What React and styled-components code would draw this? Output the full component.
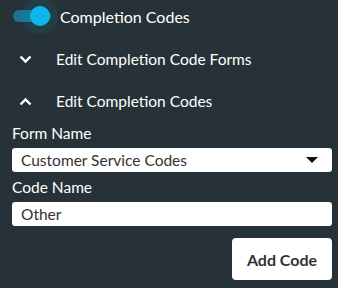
import React from "react";
import styled, { createGlobalStyle } from "styled-components";

const GlobalStyle = createGlobalStyle`
  html, body {
    margin: 0;
    padding: 0;
    background: #263238;
  }
  body {
    font-family: Lato, "Open Sans", sans-serif;
    color: #ffffff;
  }
`;

const Panel = styled.div`
  width: 338px;
  height: 288px;
  box-sizing: border-box;
  padding: 0 6px 0 12px;
  display: flex;
  flex-direction: column;
`;

const ToggleRow = styled.div`
  height: 32px;
  display: flex;
  align-items: center;
  gap: 9px;
`;

const SwitchBox = styled.div`
  position: relative;
  width: 38px;
  height: 12px;
  margin-left: 1px;
`;

const Track = styled.div`
  width: 100%;
  height: 100%;
  border-radius: 6px;
  background: ${(p) => (p.$on ? "rgba(13, 180, 233, 0.5)" : "rgba(255,255,255,0.3)")};
`;

const Halo = styled.div`
  position: absolute;
  top: -12px;
  left: ${(p) => (p.$on ? "9px" : "-9px")};
  width: 36px;
  height: 36px;
  border-radius: 50%;
  background: rgba(13, 180, 233, 0.09);
`;

const Thumb = styled.div`
  position: absolute;
  top: -4px;
  left: ${(p) => (p.$on ? "17px" : "-1px")};
  width: 20px;
  height: 20px;
  border-radius: 50%;
  background: #0db6ea;
`;

const ToggleLabel = styled.span`
  font-size: 16px;
  line-height: 1;
  margin-top: 1px;
`;

const SectionRow = styled.div`
  height: 42px;
  display: flex;
  align-items: center;
  padding-left: 7px;
  gap: 24px;
  font-size: 15.5px;
`;

const Chevron = ({ up }) => (
  <svg width="13" height="9" viewBox="0 0 13 9">
    <path
      d={up ? "M1.5 7.5 L6.5 2.5 L11.5 7.5" : "M1.5 1.5 L6.5 6.5 L11.5 1.5"}
      stroke="#ffffff"
      strokeWidth="2.4"
      fill="none"
    />
  </svg>
);

const Field = styled.label`
  display: flex;
  flex-direction: column;
  font-size: 15.5px;
  gap: 6px;
  margin-top: ${(p) => p.$top || 0}px;
`;

const Box = styled.div`
  height: 24px;
  background: #ffffff;
  border-radius: 3px;
  display: flex;
  align-items: center;
  justify-content: space-between;
  padding: 0 14px 0 9px;
  color: #333333;
  font-size: 15.5px;
`;

const Caret = () => (
  <svg width="12" height="6" viewBox="0 0 12 6">
    <path d="M0 0 H12 L6 6 Z" fill="#111111" />
  </svg>
);

const Actions = styled.div`
  display: flex;
  justify-content: flex-end;
  margin-top: 12px;
`;

const Button = styled.button`
  width: 100px;
  height: 42px;
  border: none;
  border-radius: 4px;
  background: #ffffff;
  color: #333333;
  font-family: Lato, sans-serif;
  font-weight: bold;
  font-size: 16px;
  padding: 0;
`;

export default function App() {
  return (
    <>
      <GlobalStyle />
      <Panel>
        <ToggleRow>
          <SwitchBox>
            <Track $on />
            <Halo $on />
            <Thumb $on />
          </SwitchBox>
          <ToggleLabel>Completion Codes</ToggleLabel>
        </ToggleRow>
        <SectionRow style={{ marginTop: 6 }}>
          <Chevron />
          <span>Edit Completion Code Forms</span>
        </SectionRow>
        <SectionRow>
          <Chevron up />
          <span>Edit Completion Codes</span>
        </SectionRow>
        <Field $top={2}>
          Form Name
          <Box>
            <span>Customer Service Codes</span>
            <Caret />
          </Box>
        </Field>
        <Field $top={6}>
          Code Name
          <Box>
            <span>Other</span>
          </Box>
        </Field>
        <Actions>
          <Button>Add Code</Button>
        </Actions>
      </Panel>
    </>
  );
}
